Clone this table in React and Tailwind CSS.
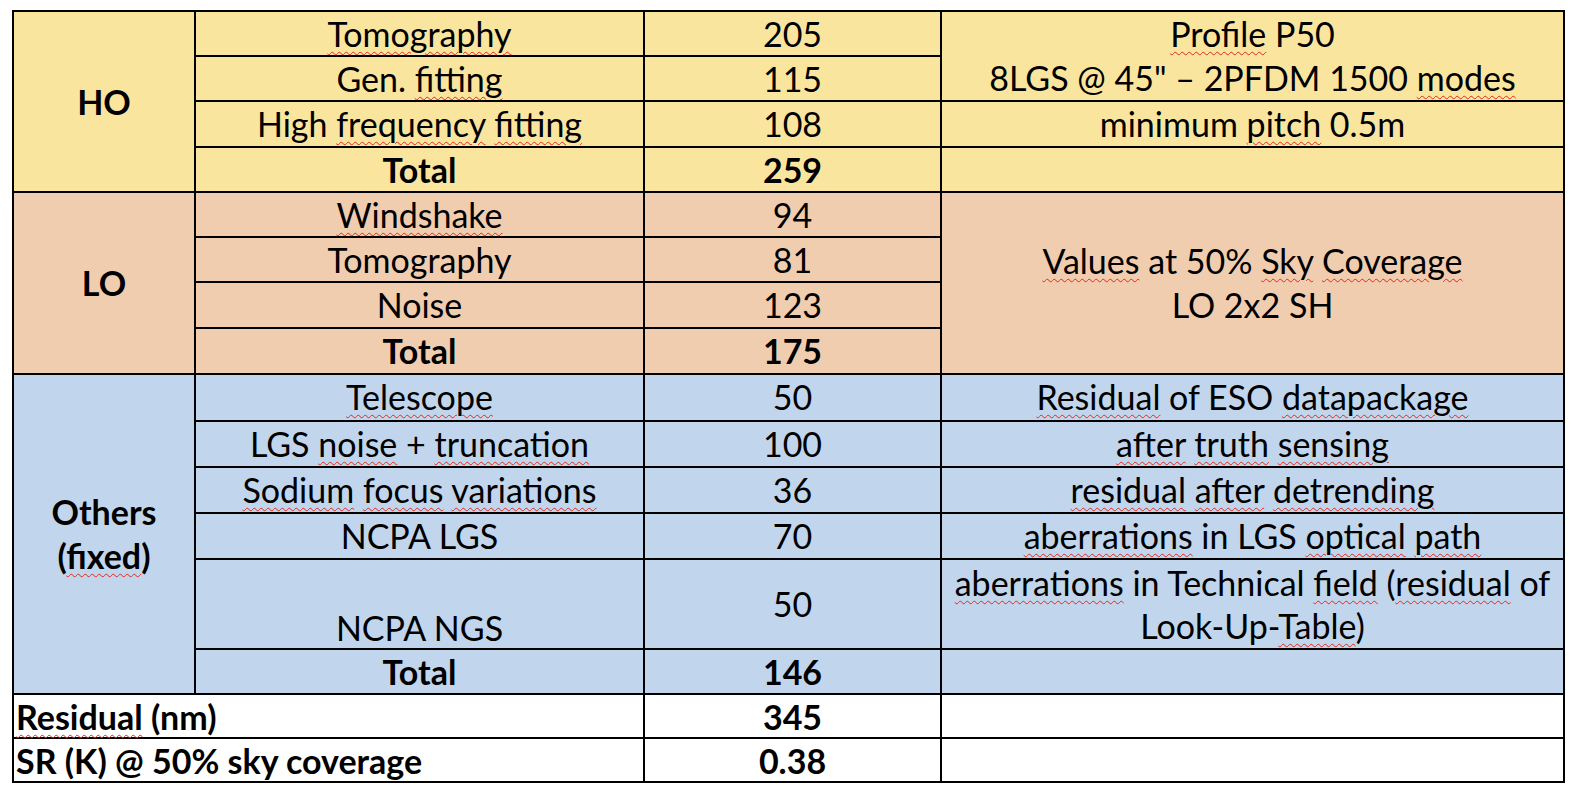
import React from "react";

function S({ children }) {
  return (
    <span className="underline decoration-wavy decoration-[#e2281c] decoration-1 underline-offset-[4px]">
      {children}
    </span>
  );
}

const base = "border-2 border-black px-1 pb-0 text-center align-top pt-[3px] leading-[38px] whitespace-nowrap";
const mid = "border-2 border-black px-1 py-0 text-center align-middle leading-[44px] whitespace-nowrap";
const Y = "bg-[#fae59f]";
const P = "bg-[#f1cdb0]";
const B = "bg-[#c1d6ec]";

export default function App() {
  return (
    <div className="min-h-screen bg-white pl-[12px] pt-[10px]">
      <table className="table-fixed border-collapse w-[1551px] text-[34px] text-black font-['Lato',sans-serif]">
        <colgroup>
          <col className="w-[182px]" />
          <col className="w-[449px]" />
          <col className="w-[297px]" />
          <col className="w-[623px]" />
        </colgroup>
        <tbody>
          {/* HO */}
          <tr className="h-[45px]">
            <td rowSpan={4} className={`${mid} ${Y} font-bold`}>HO</td>
            <td className={`${base} ${Y}`}><S>Tomography</S></td>
            <td className={`${base} ${Y}`}>205</td>
            <td rowSpan={2} className={`${mid} ${Y}`}>
              <S>Profile</S> P50
              <br />
              {'8LGS @ 45" – 2PFDM 1500 '}<S>modes</S>
            </td>
          </tr>
          <tr className="h-[45px]">
            <td className={`${base} ${Y}`}>Gen. <S>fitting</S></td>
            <td className={`${base} ${Y}`}>115</td>
          </tr>
          <tr className="h-[46px]">
            <td className={`${base} ${Y}`}>High <S>frequency</S> <S>fitting</S></td>
            <td className={`${base} ${Y}`}>108</td>
            <td className={`${base} ${Y}`}>minimum <S>pitch</S> 0.5m</td>
          </tr>
          <tr className="h-[45px]">
            <td className={`${base} ${Y} font-bold`}>Total</td>
            <td className={`${base} ${Y} font-bold`}>259</td>
            <td className={`${base} ${Y}`}></td>
          </tr>

          {/* LO */}
          <tr className="h-[45px]">
            <td rowSpan={4} className={`${mid} ${P} font-bold`}>LO</td>
            <td className={`${base} ${P}`}><S>Windshake</S></td>
            <td className={`${base} ${P}`}>94</td>
            <td rowSpan={4} className={`${mid} ${P}`}>
              <S>Values</S> at 50% <S>Sky</S> <S>Coverage</S>
              <br />
              LO 2x2 SH
            </td>
          </tr>
          <tr className="h-[45px]">
            <td className={`${base} ${P}`}>Tomography</td>
            <td className={`${base} ${P}`}>81</td>
          </tr>
          <tr className="h-[46px]">
            <td className={`${base} ${P}`}>Noise</td>
            <td className={`${base} ${P}`}>123</td>
          </tr>
          <tr className="h-[46px]">
            <td className={`${base} ${P} font-bold`}>Total</td>
            <td className={`${base} ${P} font-bold`}>175</td>
          </tr>

          {/* Others */}
          <tr className="h-[47px]">
            <td rowSpan={6} className={`${mid} ${B} font-bold`}>
              Others
              <br />
              (<S>fixed</S>)
            </td>
            <td className={`${base} ${B}`}><S>Telescope</S></td>
            <td className={`${base} ${B}`}>50</td>
            <td className={`${base} ${B}`}><S>Residual</S> of ESO <S>datapackage</S></td>
          </tr>
          <tr className="h-[46px]">
            <td className={`${base} ${B}`}>LGS <S>noise</S> + <S>truncation</S></td>
            <td className={`${base} ${B}`}>100</td>
            <td className={`${base} ${B}`}><S>after</S> <S>truth</S> <S>sensing</S></td>
          </tr>
          <tr className="h-[46px]">
            <td className={`${base} ${B}`}><S>Sodium</S> <S>focus</S> <S>variations</S></td>
            <td className={`${base} ${B}`}>36</td>
            <td className={`${base} ${B}`}><S>residual</S> <S>after</S> <S>detrending</S></td>
          </tr>
          <tr className="h-[46px]">
            <td className={`${base} ${B}`}>NCPA LGS</td>
            <td className={`${base} ${B}`}>70</td>
            <td className={`${base} ${B}`}><S>aberrations</S> in LGS <S>optical</S> <S>path</S></td>
          </tr>
          <tr className="h-[90px]">
            <td className={`border-2 border-black px-1 pt-0 pb-[1px] text-center align-bottom leading-[38px] whitespace-nowrap ${B}`}>NCPA NGS</td>
            <td className={`border-2 border-black px-1 py-0 text-center align-middle leading-[38px] ${B}`}>50</td>
            <td className={`border-2 border-black px-0 py-0 text-center align-middle leading-[43px] whitespace-nowrap ${B}`}>
              <S>aberrations</S> in Technical <S>field</S> (<S>residual</S> of
              <br />
              Look-Up-<S>Table</S>)
            </td>
          </tr>
          <tr className="h-[45px]">
            <td className={`${base} ${B} font-bold`}>Total</td>
            <td className={`${base} ${B} font-bold`}>146</td>
            <td className={`${base} ${B}`}></td>
          </tr>

          {/* Residual */}
          <tr className="h-[44px]">
            <td colSpan={2} className="border-2 border-black pl-[2px] pr-1 pb-0 pt-[3px] text-left align-top leading-[38px] whitespace-nowrap font-bold bg-white">
              <S>Residual</S> (nm)
            </td>
            <td className={`${base} bg-white font-bold`}>345</td>
            <td className={`${base} bg-white`}></td>
          </tr>
          <tr className="h-[44px]">
            <td colSpan={2} className="border-2 border-black pl-[2px] pr-1 pb-0 pt-[3px] text-left align-top leading-[38px] whitespace-nowrap font-bold bg-white">
              SR (K) @ 50% sky coverage
            </td>
            <td className={`${base} bg-white font-bold`}>0.38</td>
            <td className={`${base} bg-white`}></td>
          </tr>
        </tbody>
      </table>
    </div>
  );
}
